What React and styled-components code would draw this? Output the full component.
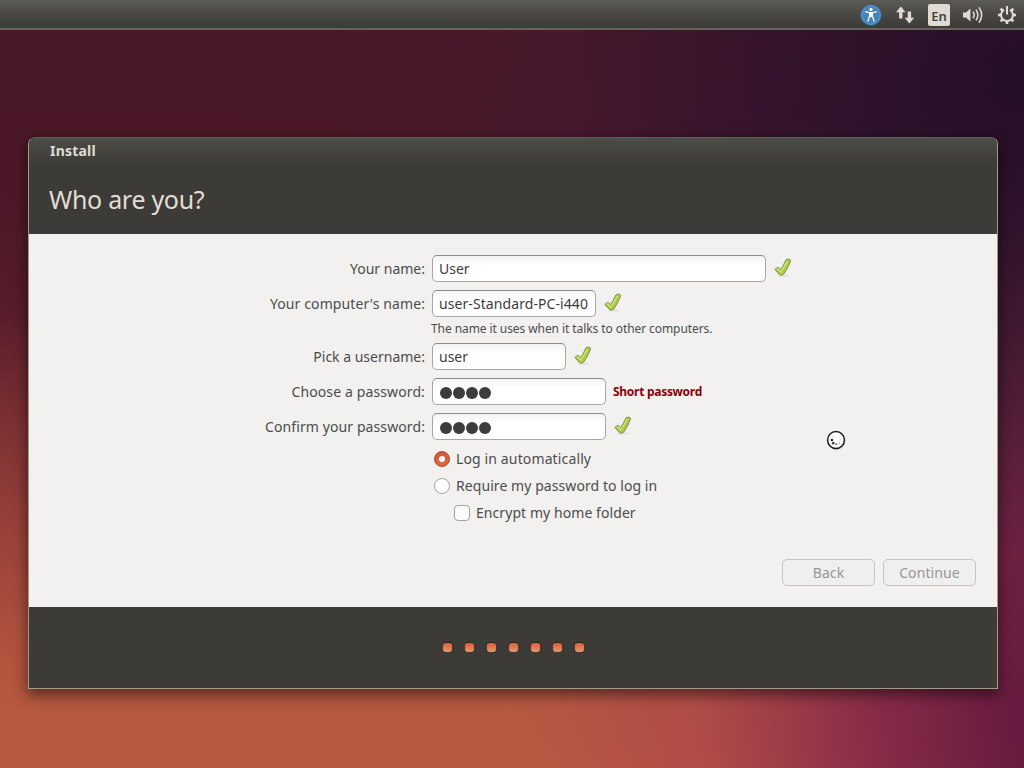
import React from "react";
import styled, { createGlobalStyle, css } from "styled-components";

const GlobalStyle = createGlobalStyle`
    *, *::before, *::after {
        box-sizing: border-box;
    }
    body {
        margin: 0;
        overflow: hidden;
        font-family: "Noto Sans", "Open Sans", sans-serif;
    }
`;

// Desktop with the wallpaper
const Desktop = styled.main`
    width: 1024px;
    height: 768px;
    position: relative;
    display: flex;
    flex-direction: column;
    align-items: center;
    overflow: hidden;
    background:
        radial-gradient(ellipse 460px 480px at 100% 10%, rgba(34, 14, 38, 0.95), rgba(34, 14, 38, 0) 100%),
        radial-gradient(ellipse 640px 520px at 92% 24%, rgba(60, 24, 56, 0.8), rgba(60, 24, 56, 0) 100%),
        radial-gradient(ellipse 560px 640px at 106% 94%, rgba(98, 24, 62, 1) 8%, rgba(128, 36, 72, 0.85) 38%, rgba(166, 62, 78, 0.5) 68%, rgba(180, 70, 76, 0) 100%),
        linear-gradient(180deg, #4a1826 0%, #4c1827 25%, #561c2a 40%, #7c3033 55%, #964039 68%, #ac503d 82%, #b4583f 90%, #b85a42 100%);
`;

// Top panel
const Panel = styled.header`
    width: 100%;
    height: 30px;
    display: flex;
    justify-content: flex-end;
    align-items: center;
    gap: 12px;
    padding: 1px 6px 0 0;
    background: linear-gradient(180deg, #5c5b55 0%, #4b4a46 45%, #3e3d39 92%);
    border-bottom: 2px solid #66625c;
`;

const Indicator = styled.svg`
    display: block;
    width: 22px;
    height: 22px;
    margin-top: 1px;
    overflow: visible;
`;

const Keyboard = styled.span`
    width: 22px;
    height: 22px;
    margin-top: 1px;
    border-radius: 2px;
    background: #dfdbd2;
    color: #42413c;
    font-size: 13px;
    font-weight: 600;
    line-height: 24px;
    text-align: center;
`;

// Installer window
const Window = styled.section`
    width: 970px;
    height: 552px;
    margin: 107px 0 0 2px;
    display: flex;
    flex-direction: column;
    border: 1px solid #a39a8a;
    border-top-color: #5e5d57;
    border-radius: 7px 7px 0 0;
    background: #3c3b37;
    box-shadow: 0 5px 14px 1px rgba(0, 0, 0, 0.5);
    overflow: hidden;
`;

const TitleBar = styled.div`
    height: 27px;
    padding-left: 21px;
    background: linear-gradient(180deg, #4c4d47, #3c3b37);
    color: #dfdbd2;
    font-size: 14px;
    font-weight: 700;
    line-height: 26px;
    letter-spacing: 0.2px;
`;

const Heading = styled.h1`
    height: 69px;
    margin: 0;
    padding-left: 20px;
    color: #e2ded5;
    font-size: 25px;
    font-weight: 400;
    line-height: 68px;
    letter-spacing: -0.3px;
`;

const Page = styled.div`
    height: 373px;
    display: flex;
    flex-direction: column;
    padding: 21px 21px 0 0;
    background: #f2f1f0;
    color: #4c4c4c;
    font-size: 14px;
`;

const Row = styled.div`
    height: 27px;
    margin-bottom: 8px;
    display: grid;
    grid-template-columns: 396px auto auto 1fr;
    column-gap: 7px;
    align-items: center;
`;

const Label = styled.label`
    text-align: right;
    white-space: nowrap;
    line-height: 27px;
    letter-spacing: ${props => props.$spacing || 0}px;
`;

const Field = styled.div`
    width: ${props => props.$width}px;
    height: 27px;
    padding: 0 6px;
    display: flex;
    align-items: center;
    border: 1px solid #a9a6a3;
    border-top-color: #8f8c89;
    border-radius: 5px;
    background: linear-gradient(180deg, #f3f3f3, #fff 35%);
    color: #3c3c3c;
    white-space: nowrap;
    overflow: hidden;
    letter-spacing: ${props => props.$spacing || 0}px;
`;

const Dot = styled.i`
    width: 12px;
    height: 12px;
    margin: 2px 0 0 1px;
    flex: none;
    border-radius: 50%;
    background: #3c3c3c;
`;

const Hint = styled.p`
    height: 26px;
    margin: -8px 0 0 402px;
    font-size: 12px;
    line-height: 23px;
    letter-spacing: -0.08px;
`;

const Warning = styled.strong`
    color: #8b0008;
    font-size: 12px;
    font-weight: 700;
    letter-spacing: -0.28px;
`;

const Options = styled.div`
    margin-top: -3px;
`;

const Option = styled.label`
    height: 27px;
    margin-left: ${props => (props.$nested ? 425 : 405)}px;
    display: flex;
    align-items: center;
    gap: 6px;
    line-height: 27px;
    white-space: nowrap;
    letter-spacing: ${props => props.$spacing || 0}px;
`;

const Radio = styled.span`
    width: 16px;
    height: 16px;
    display: grid;
    place-items: center;
    border: 1px solid #aaa6a2;
    border-radius: 50%;
    background: #fff;

    ${props => props.$checked && css`
        border-color: #a8482a;
        background: linear-gradient(180deg, #cf5a35, #dd6c45);

        &::after {
            content: "";
            width: 6px;
            height: 6px;
            border-radius: 50%;
            background: #fff;
        }
    `}
`;

const Checkbox = styled.span`
    width: 16px;
    height: 16px;
    border: 1px solid #a5a19d;
    border-radius: 4px;
    background: #fbfbfb;
`;

const Actions = styled.div`
    margin-top: 33px;
    display: flex;
    justify-content: flex-end;
    gap: 8px;
`;

const Button = styled.button`
    width: 93px;
    height: 27px;
    padding: 0;
    border: 1px solid #c6c3c0;
    border-radius: 5px;
    background: #efefee;
    color: #989796;
    font-family: inherit;
    font-size: 14px;
    line-height: 25px;
    letter-spacing: 0.1px;
`;

const Footer = styled.footer`
    flex: 1;
    display: flex;
    justify-content: center;
    align-items: center;
    gap: 11px;
    background: #3c3b37;
`;

const Step = styled.span`
    width: 11px;
    height: 11px;
    border: 1px solid #49372e;
    border-top-color: #2c2523;
    border-radius: 4px;
    background: linear-gradient(180deg, #e35c34, #dc9a72);
`;

// Busy pointer, floats over the window
const Pointer = styled.svg`
    position: absolute;
    left: 826px;
    top: 430px;
    width: 20px;
    height: 20px;
    overflow: visible;
`;

const TickIcon = styled.svg`
    width: 20px;
    height: 22px;
    margin-top: -1px;
    display: block;
    overflow: visible;
`;

const Tick = () => (
    <TickIcon viewBox="0 0 20 22">
        <ellipse cx="10" cy="18.4" rx="6" ry="1.4" fill="#000" opacity="0.06" />
        <path
            d="M2.1 12.4Q3.4 10.6 5 10.3Q6.4 10.8 7.3 12.9Q10.2 9.2 12.9 3Q14.6 1.5 16.9 2.5Q17.9 3 17.5 4.2Q14.6 11.6 11 16.8Q9.3 18.6 7.3 18Q4 15.6 2.1 12.4Z"
            fill="#aecb45"
            stroke="#7f9444"
            strokeWidth="1"
            strokeLinejoin="round"
        />
        <path d="M4 12.3 5.2 11.6 7.5 15Q11.6 9.8 14.2 3.9" fill="none" stroke="#d3e682" strokeWidth="1.2" />
    </TickIcon>
);

const Accessibility = () => (
    <Indicator viewBox="0 0 22 22">
        <circle cx="11" cy="11" r="10.6" fill="#356fa8" />
        <circle cx="11" cy="11" r="9.3" fill="#4583bd" stroke="#6fa5d4" strokeWidth="0.8" />
        <circle cx="11" cy="5.4" r="1.6" fill="#fff" />
        <path d="M5.2 7.6 9.6 8.7V12L7.8 17.6M16.8 7.6 12.4 8.7V12L14.2 17.6" fill="none" stroke="#fff" strokeWidth="1.3" />
        <path d="M9.2 8H12.8V12.4L11 13.2 9.2 12.4Z" fill="#fff" />
    </Indicator>
);

const Network = () => (
    <Indicator viewBox="0 0 22 22" fill="#dfdbd2">
        <path d="M6.8 2.6 11.6 8.2H8.5V14.6H5.1V8.2H2Z" />
        <path d="M15.4 19.4 10.6 13.8H13.7V7.4H17.1V13.8H20.2Z" />
    </Indicator>
);

const Volume = () => (
    <Indicator viewBox="0 0 22 22">
        <path d="M1 8.6H4L8.4 4.6V17.4L4 13.4H1Z" fill="#dfdbd2" />
        <path d="M11 7.8Q13.4 11 11 14.2M14 5.6Q17.8 11 14 16.4M17 3.4Q22.4 11 17 18.6" fill="none" stroke="#dfdbd2" strokeWidth="1.6" />
    </Indicator>
);

const teeth = [45, 90, 135, 180, 225, 270, 315];

const Session = () => (
    <Indicator viewBox="0 0 22 22">
        <path d="M8 5.9A6 6 0 1 0 14 5.9" fill="none" stroke="#dfdbd2" strokeWidth="2" />
        <path d="M11 2V10.5" stroke="#dfdbd2" strokeWidth="2" />
        {teeth.map(angle => (
            <path key={angle} d="M11 2V5" stroke="#dfdbd2" strokeWidth="2.6" transform={`rotate(${angle} 11 11)`} />
        ))}
    </Indicator>
);

const Dots = () => (
    <>
        <Dot />
        <Dot />
        <Dot />
        <Dot />
    </>
);

const App = () => {
    return (
        <>
            <GlobalStyle />
            <Desktop>
                <Panel>
                    <Accessibility />
                    <Network />
                    <Keyboard>En</Keyboard>
                    <Volume />
                    <Session />
                </Panel>
                <Window>
                    <TitleBar>Install</TitleBar>
                    <Heading>Who are you?</Heading>
                    <Page>
                        <Row>
                            <Label>Your name:</Label>
                            <Field $width={334}>User</Field>
                            <Tick />
                        </Row>
                        <Row>
                            <Label $spacing={0.1}>Your computer's name:</Label>
                            <Field $width={164} $spacing={0.08}>user-Standard-PC-i440</Field>
                            <Tick />
                        </Row>
                        <Hint>The name it uses when it talks to other computers.</Hint>
                        <Row>
                            <Label>Pick a username:</Label>
                            <Field $width={134}>user</Field>
                            <Tick />
                        </Row>
                        <Row>
                            <Label $spacing={0.12}>Choose a password:</Label>
                            <Field $width={174}><Dots /></Field>
                            <Warning>Short password</Warning>
                        </Row>
                        <Row>
                            <Label $spacing={0.1}>Confirm your password:</Label>
                            <Field $width={174}><Dots /></Field>
                            <Tick />
                        </Row>
                        <Options>
                            <Option $spacing={0.13}><Radio $checked />Log in automatically</Option>
                            <Option $spacing={0.07}><Radio />Require my password to log in</Option>
                            <Option $spacing={0.07} $nested><Checkbox />Encrypt my home folder</Option>
                        </Options>
                        <Actions>
                            <Button disabled>Back</Button>
                            <Button disabled>Continue</Button>
                        </Actions>
                    </Page>
                    <Footer>
                        {[1, 2, 3, 4, 5, 6, 7].map(step => <Step key={step} />)}
                    </Footer>
                </Window>
                <Pointer viewBox="0 0 20 20">
                    <circle cx="10.4" cy="11" r="9" fill="#000" opacity="0.15" />
                    <circle cx="10" cy="10" r="8.4" fill="#fff" stroke="#1c1c1c" strokeWidth="1.5" />
                    <circle cx="5.9" cy="10" r="1.3" fill="#222" />
                    <circle cx="7.2" cy="13.2" r="1.4" fill="#444" />
                    <circle cx="10.3" cy="14.2" r="1.1" fill="#888" />
                    <circle cx="13.3" cy="13" r="1" fill="#c4c4c4" />
                    <circle cx="14.3" cy="9.8" r="0.9" fill="#dcdcdc" />
                    <circle cx="13" cy="6.8" r="0.9" fill="#e0e0e0" />
                    <circle cx="7" cy="6.8" r="0.8" fill="#d0d0d0" />
                </Pointer>
            </Desktop>
        </>
    );
};

export default App;
